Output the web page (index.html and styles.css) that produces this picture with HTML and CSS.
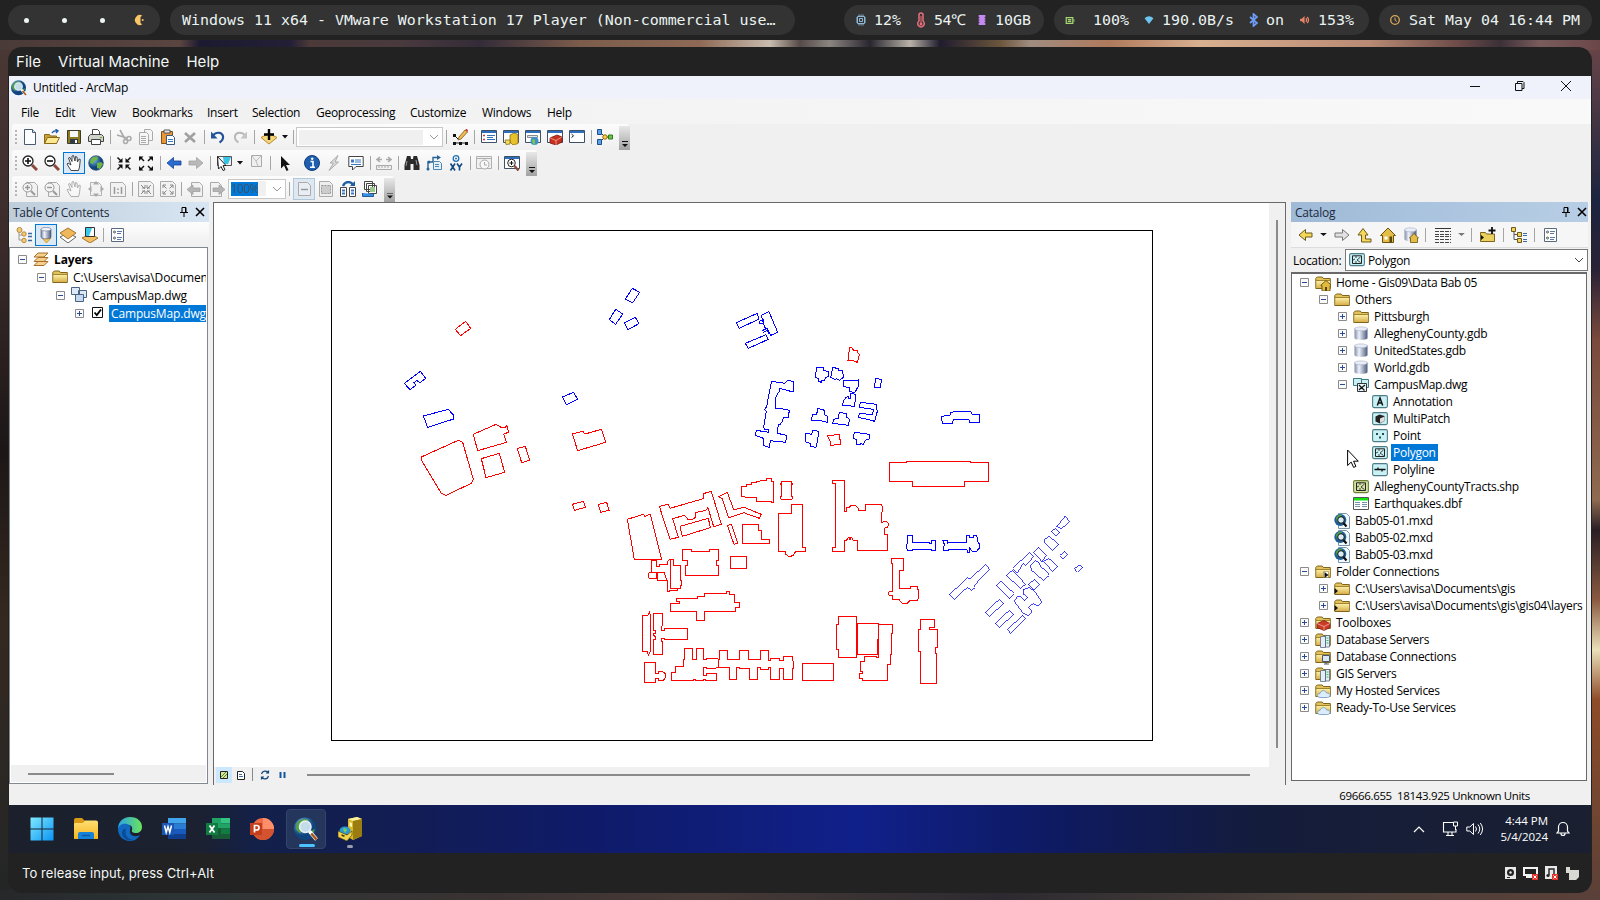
FILE: index.html
```html
<!DOCTYPE html>
<html lang="en">
<head>
<meta charset="utf-8">
<title>Untitled - ArcMap</title>
<link rel="stylesheet" href="styles.css">
</head>
<body>
<svg class="defs" aria-hidden="true">
<defs>
<linearGradient id="gdb" x1="0" x2="1" y1="0" y2="0"><stop offset="0" stop-color="#7f8ba6"/><stop offset=".35" stop-color="#eef2fa"/><stop offset="1" stop-color="#4c5a7c"/></linearGradient>
<linearGradient id="gfo" x1="0" x2="0" y1="0" y2="1"><stop offset="0" stop-color="#fbeea6"/><stop offset="1" stop-color="#d8b04a"/></linearGradient>
<linearGradient id="gwin" x1="0" x2="1" y1="0" y2="1"><stop offset="0" stop-color="#7fe9ff"/><stop offset="1" stop-color="#0a94f5"/></linearGradient>
<linearGradient id="gex" x1="0" x2="0" y1="0" y2="1"><stop offset="0" stop-color="#ffdf74"/><stop offset="1" stop-color="#f8b51e"/></linearGradient>
<linearGradient id="gedge" x1="0" x2="1" y1="0" y2="0"><stop offset="0" stop-color="#2aa4e8"/><stop offset="1" stop-color="#6be35a"/></linearGradient>
<radialGradient id="gglobe" cx=".35" cy=".3"><stop offset="0" stop-color="#7fbcea"/><stop offset="1" stop-color="#0f447e"/></radialGradient>
<symbol id="new" viewBox="0 0 16 16"><path d="M2.5.5h8l3 3v12h-11z" fill="#fbfdff" stroke="#4b5a70"/><path d="M10.500.5v3h3" fill="#cfe0f2" stroke="#4b5a70"/></symbol>
<symbol id="open" viewBox="0 0 16 16"><path d="M.5 14.500v-9h5l1 1.500h6v7.500z" fill="#c9a13c" stroke="#8a6914"/><path d="M.5 14.500l3-6h12l-3 6z" fill="#fbe694" stroke="#8a6914"/><path d="M8 4c1-2 3-2.500 5-2.200M11.500.2l2.500 1.700-2 2" fill="none" stroke="#1b5dab" stroke-width="1.400"/></symbol>
<symbol id="save" viewBox="0 0 16 16"><path d="M1.500 1.500h13v13h-13z" fill="#8c7a22" stroke="#3e3a28"/><path d="M4 2h8v6H4z" fill="#f4f6f8"/><path d="M4 10h8v4.500H4z" fill="#2f3b44"/><path d="M9 11h2v3H9z" fill="#fff"/></symbol>
<symbol id="print" viewBox="0 0 16 16"><path d="M4.500 7V.5h5l2 2V7" fill="#fff" stroke="#444"/><path d="M.5 7.500l2-2h11l2 2v5H.5z" fill="#cfd2c8" stroke="#444"/><path d="M3.500 10.500h9v5h-9z" fill="#fff" stroke="#444"/><path d="M12 8h2v1h-2z" fill="#61b324"/></symbol>
<symbol id="cut" viewBox="0 0 16 16"><path d="M4 1l5 9M1 6l10 3" fill="none" stroke="#aaa" stroke-width="1.600"/><circle cx="9.500" cy="12.500" r="2" fill="none" stroke="#aaa" stroke-width="1.500"/><circle cx="13" cy="9.500" r="2" fill="none" stroke="#aaa" stroke-width="1.500"/></symbol>
<symbol id="copy" viewBox="0 0 16 16"><path d="M6.500.5h6l2 2v9h-8z" fill="#f5f5f5" stroke="#aaa"/><path d="M1.500 3.500h7l2 2v10h-9z" fill="#f5f5f5" stroke="#aaa"/><path d="M3 7.500h5M3 9.500h5M3 11.500h5M3 13.500h5" stroke="#aaa"/></symbol>
<symbol id="paste" viewBox="0 0 16 16"><path d="M1.500 2.500h11v12h-11z" fill="#e8963a" stroke="#80501a"/><path d="M4 1h6v3H4z" fill="#e9e9e9" stroke="#555"/><path d="M6.500 6.500h6l2 2v7h-8z" fill="#fff" stroke="#3c5a80"/><path d="M8 10.500h5M8 12.500h5" stroke="#3b78c4"/></symbol>
<symbol id="del" viewBox="0 0 16 16"><path d="M3 4l10 9M13 4L3 13" stroke="#a0a0a0" stroke-width="2.600"/></symbol>
<symbol id="undo" viewBox="0 0 16 16"><path d="M3 6.500C6 2.500 12 3 13 7c.5 3-1 5-3.500 6.500" fill="none" stroke="#23539b" stroke-width="2.200"/><path d="M1 2.500v7h6.500z" fill="#23539b"/></symbol>
<symbol id="redo" viewBox="0 0 16 16"><path d="M13 6.500C10 2.500 4 3 3 7c-.5 3 1 5 3.500 6.500" fill="none" stroke="#b8b8b8" stroke-width="2"/><path d="M15 2.500v7H8.500z" fill="#c4c4c4"/></symbol>
<symbol id="add" viewBox="0 0 16 16"><path d="M0 8.500l8-4 8 4-8 6.500z" fill="#f7d77c" stroke="#b88a26"/><path d="M8 0v11M3 5.500h10" stroke="#000" stroke-width="2.400"/></symbol>
<symbol id="editor" viewBox="0 0 16 16"><path d="M2 6l4 4M2 14h12" stroke="#222"/><path d="M1 5h3v3H1zM1 13h3v3H1zM7 13h3v3H7zM13 13h3v3h-3z" fill="#111"/><path d="M6 11l1-3 6-7 2.500 2-6.500 7z" fill="#f1bc4c" stroke="#7c5420" stroke-width=".8"/><path d="M13 1l2.500 2 .5-2-1.500-1.200z" fill="#cc3a3a"/></symbol>
<symbol id="wbase" viewBox="0 0 16 16"><path d="M.5 1.500h15v12H.5z" fill="#fff" stroke="#3e4f66"/><path d="M1 2h14v2H1z" fill="#2f6fc0"/></symbol>
<symbol id="wtoc" viewBox="0 0 16 16"><use href="#wbase"/><path d="M2 6.500h2M2 10.500h2" stroke="#d13a2a" stroke-width="1.500"/><path d="M6 6.500h8M6 8.500h6M6 10.500h8" stroke="#2f6fc0"/></symbol>
<symbol id="wcat" viewBox="0 0 16 16"><use href="#wbase"/><path d="M7 6l4-2 4 1.500v9L10 16l-3-3z" fill="#e8c22e" stroke="#8c7010" stroke-width=".8"/><path d="M2 11h5v4l-4 .5z" fill="#f5dc62" stroke="#8c7010" stroke-width=".8"/></symbol>
<symbol id="wsearch" viewBox="0 0 16 16"><use href="#wbase"/><path d="M2.500 6.500h10v2h-10z" fill="#dfe9f5" stroke="#888"/><circle cx="9.500" cy="12" r="4" fill="#3f8fc9"/><path d="M7 11c2-2 4 0 3 1s1 2 0 4c-2-1-3-3-3-5z" fill="#7cc74c"/></symbol>
<symbol id="wbox" viewBox="0 0 16 16"><use href="#wbase"/><path d="M3 9l7-3 5 2v5l-6 3-6-2z" fill="#c8311f" stroke="#7a150c" stroke-width=".8"/><path d="M3 9l6 2.500L15 8M9 11v5" stroke="#f0a79c" stroke-width=".8" fill="none"/></symbol>
<symbol id="wpy" viewBox="0 0 16 16"><use href="#wbase"/><path d="M2.500 5l2 1.800-2 1.800" fill="none" stroke="#111"/></symbol>
<symbol id="model" viewBox="0 0 16 16"><path d="M3 3l5 5M3 13l5-5h6" stroke="#333" fill="none"/><path d="M.5.500h4v5h-4zM.5 10.500h4v5h-4z" fill="#5aa0e8" stroke="#1c4e90"/><circle cx="8" cy="8" r="2.200" fill="#ffd24a" stroke="#8c6a10"/><path d="M11.500 6h4v4h-4z" fill="#6cc24a" stroke="#2c7a1c"/></symbol>
<symbol id="zin" viewBox="0 0 16 16"><circle cx="6" cy="6" r="5" fill="#fff" stroke="#222" stroke-width="1.300"/><path d="M6 3v6M3 6h6" stroke="#111" stroke-width="1.600"/><path d="M10 10l5 5" stroke="#8c4a3c" stroke-width="3"/></symbol>
<symbol id="zout" viewBox="0 0 16 16"><circle cx="6" cy="6" r="5" fill="#fff" stroke="#222" stroke-width="1.300"/><path d="M3 6h6" stroke="#111" stroke-width="1.600"/><path d="M10 10l5 5" stroke="#8c4a3c" stroke-width="3"/></symbol>
<symbol id="hand" viewBox="0 0 16 16"><path d="M5 15.500L1 9l1-1 3 2-2.500-7L4 2.500l2 4L6 1l1.500-.5L9 6l.5-4.500L11 2l.5 5L13 4l1.300.5L13.500 12l-1 3.500z" fill="#fff" stroke="#333" stroke-width=".9"/></symbol>
<symbol id="globe" viewBox="0 0 16 16"><circle cx="8" cy="8" r="7.300" fill="url(#gglobe)" stroke="#2a4a78" stroke-width=".7"/><path d="M3 4c3-3 6-3 7-2l-1 3-3 1-1 3-3-1zM9 8l4-1 2 2-3 5-3-1z" fill="#6fb53f"/></symbol>
<symbol id="fixin" viewBox="0 0 16 16"><path d="M1.500 2.500l4 4M14.500 2.500l-4 4M1.500 14.500l4-4M14.500 14.500l-4-4" stroke="#111" stroke-width="1.500"/><path d="M6.500 3v4.500H2zM9.500 3v4.500H14zM6.500 14V9.500H2zM9.500 14V9.500H14z" fill="#111"/></symbol>
<symbol id="fixout" viewBox="0 0 16 16"><path d="M2 2l4 4M14 2l-4 4M2 15l4-4M14 15l-4-4" stroke="#111" stroke-width="1.500"/><path d="M1 1.500h4.500L1 6zM15 1.500h-4.500L15 6zM1 15.500h4.500L1 11zM15 15.500h-4.500L15 11z" fill="#111"/></symbol>
<symbol id="left" viewBox="0 0 16 16"><path d="M1 8l6.500-5.500v3.500H15v4H7.500v3.500z" fill="#2b6cd4" stroke="#15418e" stroke-width=".8"/></symbol>
<symbol id="right" viewBox="0 0 16 16"><path d="M15 8L8.500 2.500v3.500H1v4h7.500v3.500z" fill="#b9b9b9" stroke="#a2a2a2" stroke-width=".8"/></symbol>
<symbol id="select" viewBox="0 0 16 16"><path d="M1.500 1.500h14v9h-14z" fill="#f1f1f1" stroke="#555"/><path d="M7 2h8l-3 7H8z" fill="#35c3e6"/><path d="M1.500 1.500l8.500 9-3 .2 2 4-2 .8-2-4-2.500 2.500z" fill="#fff" stroke="#222"/></symbol>
<symbol id="clear" viewBox="0 0 16 16"><path d="M3.500.5h10v11h-10z" fill="#f0f0f0" stroke="#aaa"/><path d="M4 1l4 5 5-5M8 6l2 5" stroke="#bbb" fill="none"/></symbol>
<symbol id="arrow" viewBox="0 0 16 16"><path d="M4 1v12.500l3-3 2.500 5.500 2-1-2.500-5h4z" fill="#111"/></symbol>
<symbol id="info" viewBox="0 0 16 16"><circle cx="8" cy="8" r="7.500" fill="#1f5fb0" stroke="#123d78"/><path d="M6.500 6.500h2.500V12M6 12.200h5" stroke="#fff" stroke-width="1.600" fill="none"/><circle cx="8.200" cy="3.800" r="1.200" fill="#fff"/></symbol>
<symbol id="bolt" viewBox="0 0 16 16"><path d="M12 .5L4 8h3.500L3 15.500 12.500 7H9z" fill="#ddd" stroke="#aaa"/></symbol>
<symbol id="callout" viewBox="0 0 16 16"><path d="M.8 1.500h14.400v10H8L4.500 15v-3.500H.8z" fill="#fff" stroke="#444"/><path d="M3 4.500h3v3H3z" fill="#3b78c4"/><path d="M7 5h6M7 7h6M3 9.500h10" stroke="#3b78c4"/></symbol>
<symbol id="measure" viewBox="0 0 16 16"><path d="M.5 10.500h15v4H.5zM3 11v2M6 11v2M9 11v2M12 11v2" fill="#f0f0f0" stroke="#aaa"/><path d="M1 4.500h5M10 4.500h5M4 2L1 4.500 4 7M12 2l3 2.500L12 7" stroke="#aaa" stroke-width="1.500" fill="none"/></symbol>
<symbol id="find" viewBox="0 0 16 16"><path d="M3 1h3.500l.5 3h2l.5-3H13l2.500 9v5h-6v-6h-3v6h-6v-5z" fill="#2b2b2b"/><path d="M3 6l-1 5M12 5l1 5" stroke="#999"/></symbol>
<symbol id="route" viewBox="0 0 16 16"><path d="M2 13V7h5V2.500h5" stroke="#2a6496" fill="none" stroke-width="1.400"/><path d="M11 0l4 2.500L11 5z" fill="#2a6496"/><circle cx="2" cy="14" r="1.500" fill="#2a6496"/><circle cx="3" cy="7" r="1.500" fill="#2a6496"/><path d="M7.500 6.500h6l2 2v6h-8z" fill="#e6f2fb" stroke="#4a87b5"/><path d="M9 9.500h4M9 11.500h4" stroke="#4a87b5"/></symbol>
<symbol id="xy" viewBox="0 0 16 16"><circle cx="8" cy="3.500" r="2.800" fill="#fff" stroke="#1f6fb0" stroke-width="1.300"/><circle cx="8" cy="3.500" r="1" fill="#1f6fb0"/><path d="M2.500 8.500l4.500 7M7 8.500l-4.500 7M9 8.500l2.500 3.500 2.500-3.500M11.500 12v3.500" stroke="#134a80" stroke-width="1.600" fill="none"/></symbol>
<symbol id="time" viewBox="0 0 16 16"><path d="M.5 1.500h15v12H.5zM1 3.500h14" fill="#f0f0f0" stroke="#b0b0b0"/><circle cx="8.500" cy="9.500" r="4.500" fill="#f8f8f8" stroke="#aaa"/><path d="M8.500 7v3h2.500" stroke="#aaa" fill="none"/></symbol>
<symbol id="viewer" viewBox="0 0 16 16"><use href="#wbase"/><circle cx="7.500" cy="8" r="3.800" fill="#fff" stroke="#222"/><path d="M7.500 6v4M5.500 8h4" stroke="#111"/><path d="M10.500 11l4 4.500" stroke="#8c4a3c" stroke-width="2.400"/></symbol>
<symbol id="gpage" viewBox="0 0 16 16"><path d="M4.500 1.500h8l3 3v11h-11z" fill="#f2f2f2" stroke="#aaa"/></symbol>
<symbol id="gzi" viewBox="0 0 16 16"><use href="#gpage"/><circle cx="5.500" cy="6.500" r="4.500" fill="#f4f4f4" stroke="#999"/><path d="M5.500 4v5M3 6.500h5" stroke="#999" stroke-width="1.400"/><path d="M9 10l4 4" stroke="#999" stroke-width="2"/></symbol>
<symbol id="gzo" viewBox="0 0 16 16"><use href="#gpage"/><circle cx="5.500" cy="6.500" r="4.500" fill="#f4f4f4" stroke="#999"/><path d="M3 6.500h5" stroke="#999" stroke-width="1.400"/><path d="M9 10l4 4" stroke="#999" stroke-width="2"/></symbol>
<symbol id="gfull" viewBox="0 0 16 16"><path d="M2.500 1.500h8l3 3v10h-11z" fill="#f2f2f2" stroke="#b5b5b5"/><path d="M8 0l3 3.500H5zM8 16l3-3.500H5zM0 8l3.500-3v6zM16 8l-3.500-3v6z" fill="#aaa"/></symbol>
<symbol id="g11" viewBox="0 0 16 16"><path d="M.5 1.500h12l3 3v11H.5z" fill="#f2f2f2" stroke="#aaa"/><path d="M4.500 6v7M11.500 6v7M8 7.500v1.500M8 11v1.500" stroke="#999" stroke-width="1.500"/></symbol>
<symbol id="gin" viewBox="0 0 16 16"><path d="M.5.500h12l3 3v12H.5z" fill="#f2f2f2" stroke="#aaa"/><path d="M3 4l4 4M13 4L9 8M3 13l3.500-3.500M13 13L9.500 9.500M7 4v3H4M9 4v3h3M7 13v-3H4M9 13v-3h3" stroke="#888" fill="none"/></symbol>
<symbol id="gout" viewBox="0 0 16 16"><path d="M.5.500h12l3 3v12H.5z" fill="#f2f2f2" stroke="#aaa"/><path d="M3 4l3.500 3.500M13 4L9.500 7.500M3 13l3.500-3.500M13 13L9.500 9.500M3 7V4h3M13 7V4h-3M3 10v3h3M13 10v3h-3" stroke="#888" fill="none"/></symbol>
<symbol id="gleft" viewBox="0 0 16 16"><use href="#gpage"/><path d="M0 8.500L6 4v3h7v3.500H6v3z" fill="#b5b5b5" stroke="#999" stroke-width=".7"/></symbol>
<symbol id="gright" viewBox="0 0 16 16"><path d="M1.500 1.500h8l3 3v11h-11z" fill="#f2f2f2" stroke="#aaa"/><path d="M16 8.500L10 4v3H4v3.500h6v3z" fill="#b5b5b5" stroke="#999" stroke-width=".7"/></symbol>
<symbol id="gdraft" viewBox="0 0 16 16"><path d="M2.500 1.500h9l3 3v10h-12z" fill="#e8eef4" stroke="#aaa"/><path d="M5 8.500h7" stroke="#999" stroke-width="1.500"/></symbol>
<symbol id="gfocus" viewBox="0 0 16 16"><path d="M1.500.5h10l3 3v12h-13z" fill="#eee" stroke="#aaa"/><path d="M3.500 4.500h9v8h-9z" fill="#ccc" stroke="#999" stroke-dasharray="2 1"/></symbol>
<symbol id="chg" viewBox="0 0 16 16"><path d="M.5 6.500h6v9h-6zM9.500 6.500h6v9h-6z" fill="#fff" stroke="#444"/><path d="M2 9.500h3M2 12.500h3M11 9.500h3M11 12.500h3" stroke="#3b78c4" stroke-width="2"/><path d="M3 5c2-5 8-5 10-1" fill="none" stroke="#1f5fa0" stroke-width="2.400"/><path d="M10 5h5V0z" fill="#1f5fa0"/></symbol>
<symbol id="ddp" viewBox="0 0 16 16"><path d="M2.500.5h8v8h-8zM4.500 2.500h8v8h-8zM6.500 4.500h8v8h-8z" fill="#fff" stroke="#444"/><path d="M8 6h5v5H8z" fill="#9cc88c"/><path d="M.5 12v3.500h11V13" fill="#3b8be0" stroke="#1f5fa0"/></symbol>
<symbol id="lorder" viewBox="0 0 16 16"><path d="M3 4v9h5M3 8h4" stroke="#999" fill="none"/><path d="M12 6.500h4M12 9.500h4M12 13.500h4" stroke="#3b6ca8" stroke-width="1.500"/><circle cx="3.500" cy="3" r="2.500" fill="#f0cc7a" stroke="#b98b38"/><circle cx="8" cy="7" r="2.200" fill="#f0cc7a" stroke="#b98b38"/><circle cx="8" cy="13.500" r="2.200" fill="#f0cc7a" stroke="#b98b38"/></symbol>
<symbol id="lsource" viewBox="0 0 16 16"><path d="M4 11l4.500 5 4.500-5z" fill="#f7c85c" stroke="#b88a26" stroke-width=".7"/><path d="M3 2v8c0 2.500 10 2.500 10 0V2z" fill="url(#gdb)" stroke="#46506a" stroke-width=".6"/><ellipse cx="8" cy="2.200" rx="5" ry="1.800" fill="#eef2fa" stroke="#6a748c" stroke-width=".6"/></symbol>
<symbol id="lvis" viewBox="0 0 16 16"><path d="M0 10l8-4 8 4-8 6z" fill="#fff" stroke="#666"/><path d="M0 6l8-5 8 5-8 6z" fill="#eeb75a" stroke="#a8742a"/></symbol>
<symbol id="lsel" viewBox="0 0 16 16"><path d="M0 11l8-4 8 4-8 5z" fill="#f3c066" stroke="#a8742a"/><path d="M3.500.5h9v9h-9z" fill="#37c9e8" stroke="#333"/><path d="M10 1l-3 8h5V1z" fill="#fff"/></symbol>
<symbol id="opts" viewBox="0 0 16 16"><path d="M2.500 1.500h12v13h-12z" fill="#fff" stroke="#5a6b80"/><circle cx="5.500" cy="5" r="1" fill="none" stroke="#555"/><circle cx="5.500" cy="11" r="1" fill="none" stroke="#555"/><path d="M8 4.500h5M8 6.500h4M8 10.500h5M8 12.500h4" stroke="#5a7aa8"/></symbol>
<symbol id="layers" viewBox="0 0 16 16"><path d="M1 14.500l4-4h10l-4 4zM1 10.500l4-4h10l-4 4zM1 6l4-4h10l-4 4z" fill="#f6cf8c" stroke="#a4702c"/></symbol>
<symbol id="folder" viewBox="0 0 16 16"><path d="M.8 13.500v-10l1.500-1.500h5l1 1.500h7v10z" fill="#e3c25c" stroke="#7e641c"/><path d="M1.500 6h13.500v7H1.500z" fill="url(#gfo)"/><path d="M1 5.500h14" stroke="#a08430"/></symbol>
<symbol id="fhome" viewBox="0 0 16 16"><use href="#folder"/><path d="M6 10l5-4.500 5 4.500v.8h-1V16H7v-5.200H6z" fill="#e2bb3e" stroke="#6b5212" stroke-width=".9"/><path d="M10 12h2v4h-2z" fill="#5a4512"/></symbol>
<symbol id="fconn" viewBox="0 0 16 16"><use href="#folder"/><path d="M8.500 7.500h5v6h-5z" fill="#fff" stroke="#9a8030" stroke-width=".6"/><path d="M9.500 8l4 3-4 3z" fill="#111"/></symbol>
<symbol id="flink" viewBox="0 0 16 16"><use href="#folder"/><path d="M.5 7l3.500 3-3.500 3z" fill="#111"/></symbol>
<symbol id="ftool" viewBox="0 0 16 16"><use href="#folder"/><path d="M2 8.500l7-3 6 3v4L9 15.500l-7-3z" fill="#cb3a26" stroke="#7a150c" stroke-width=".7"/><path d="M2 8.500l7 3 6-3M9 11.500v4" stroke="#f3b1a6" stroke-width=".8" fill="none"/></symbol>
<symbol id="fserv" viewBox="0 0 16 16"><use href="#folder"/><path d="M5.500 4.500h5v11h-5zM10.500 3.500h4v11.500h-4z" fill="#e4edf6" stroke="#5a6b80" stroke-width=".8"/><path d="M11.500 6h2M11.500 8.500h2M11.500 11h2" stroke="#3b6"/></symbol>
<symbol id="fdbc" viewBox="0 0 16 16"><use href="#folder"/><path d="M7.500 6.500h7v6h-7zM9 15h5M11 13v2" fill="#dce7f4" stroke="#46566e"/></symbol>
<symbol id="fcloud" viewBox="0 0 16 16"><use href="#folder"/><path d="M5 14.500c-4-.5-3-4 0-4 1-4 6-3.500 6.500-.5 4-.5 5 4 1 4.500z" fill="#dcecfa" stroke="#6d97bf" stroke-width=".8"/></symbol>
<symbol id="gdbs" viewBox="0 0 16 16"><path d="M1.500 2.500v9.500c0 2.500 13 2.500 13 0V2.500z" fill="url(#gdb)"/><ellipse cx="8" cy="2.800" rx="6.500" ry="1.900" fill="#e8edf7" stroke="#a7b0c4" stroke-width=".6"/></symbol>
<symbol id="cad" viewBox="0 0 16 16"><path d="M.5.5h8v7h-8zM7.500 3.500h8v7h-8z" fill="#dce8f6" stroke="#4c6484"/><path d="M4.500 7.500h8v7h-8z" fill="#c4d8ef" stroke="#4c6484"/></symbol>
<symbol id="cad2" viewBox="0 0 16 16"><path d="M.5 1.500h8v7h-8zM8.500 2.500h7v8h-7z" fill="#c8f0f2" stroke="#3c7a84"/><path d="M4.500 6.500h9v8h-9z" fill="#e8f8f8" stroke="#333"/><path d="M6 8l5.500 5.500M12 8l-5 4M6 13l2-2" stroke="#111" stroke-width="1.200"/></symbol>
<symbol id="tile" viewBox="0 0 16 16"><rect x=".6" y="1.600" width="14.800" height="12" rx="1.500" fill="#c9f1f4" stroke="#4d7d88" stroke-width="1.100"/></symbol>
<symbol id="tann" viewBox="0 0 16 16"><use href="#tile"/><path d="M5.300 11.500L8 4l2.700 7.500M6.300 9h3.500" fill="none" stroke="#111" stroke-width="1.500"/></symbol>
<symbol id="tmul" viewBox="0 0 16 16"><use href="#tile"/><path d="M3.500 5.500l4-2 5 1.500v5l-4.500 2.500-4.500-2z" fill="#222"/><path d="M8 7.500l4.500-2v4.500L8 12z" fill="#ddd"/></symbol>
<symbol id="tpt" viewBox="0 0 16 16"><use href="#tile"/><path d="M4 5h2v2H4zM10 5h2v2h-2zM7 8.500h2v2H7z" fill="#1c4c55"/></symbol>
<symbol id="tpg" viewBox="0 0 16 16"><use href="#tile"/><path d="M3.500 3.800h9v7.700h-9z" fill="none" stroke="#222"/><path d="M4 8l2-1M6 10h2M11.500 5L8 8l3.500 2.500M6 5h2" fill="none" stroke="#333" stroke-width=".9"/></symbol>
<symbol id="tpl" viewBox="0 0 16 16"><use href="#tile"/><path d="M2.500 7.500h11M6 5.500v2M10 7.500v2" stroke="#111" stroke-width="1.300"/></symbol>
<symbol id="shp" viewBox="0 0 16 16"><rect x=".6" y="1.600" width="14.800" height="12" rx="1.500" fill="#d4e2a4" stroke="#6d8034" stroke-width="1.100"/><path d="M3.500 3.800h9v7.700h-9z" fill="none" stroke="#222"/><path d="M4 8l2-1M6 10h2M11.500 5L8 8l3.500 2.500M6 5h2" fill="none" stroke="#333" stroke-width=".9"/></symbol>
<symbol id="dbf" viewBox="0 0 16 16"><path d="M.5 1.500h15v12H.5z" fill="#fff" stroke="#555"/><path d="M1 2h14v2.500H1z" fill="#12e212"/><path d="M2 6.500h5M2 8.500h5M2 10.500h5M9 6.500h5M9 8.500h5M9 10.500h5" stroke="#7a92ae"/></symbol>
<symbol id="mxd" viewBox="0 0 16 16"><path d="M4.500.5h8l3 3v12h-11z" fill="#f4f9fd" stroke="#7895b0"/><circle cx="6.300" cy="7" r="6" fill="#1d5f96"/><path d="M2 5c1-3 4-4 6-3l-2 4-3 3z" fill="#4fa24a"/><circle cx="7" cy="7" r="3.300" fill="#d8ecf8" stroke="#111"/><path d="M9.500 10l3 3.500" stroke="#111" stroke-width="2.200"/></symbol>
<symbol id="arcmap" viewBox="0 0 16 16"><circle cx="7.500" cy="7.800" r="7.500" fill="url(#gglobe)"/><path d="M2 4c2-3 6-3 8-2L7 6l-3 5-3-3zM10 10l4-2-2 5z" fill="#4fa24a"/><circle cx="7.500" cy="6.500" r="3.800" fill="#cfe6f4" fill-opacity=".9" stroke="#e9edf2" stroke-width="1.100"/><path d="M10.300 9.500l4.700 5.500" stroke="#fff" stroke-width="2.400"/><path d="M11.500 11l3.500 4" stroke="#a8561c" stroke-width="1.700"/></symbol>
<symbol id="yleft" viewBox="0 0 16 16"><path d="M1 8l6.500-5.500v3.500H14v4H7.500v3.500z" fill="#f5d75c" stroke="#6b5a18"/></symbol>
<symbol id="yright" viewBox="0 0 16 16"><path d="M15 8L8.500 2.500v3.500H1v4h7.500v3.500z" fill="#e2e2e2" stroke="#777"/></symbol>
<symbol id="yup" viewBox="0 0 16 16"><path d="M1 8l5-6.500L11 8H8.500v4H14v3H4.500V8z" fill="#f5d75c" stroke="#6b5a18"/></symbol>
<symbol id="house" viewBox="0 0 16 16"><path d="M.5 8.500L8 1l7.500 7.500h-2v7h-11v-7z" fill="#e3bd45" stroke="#6b5212"/><path d="M4.500 9.500h3v3h-3z" fill="#fff"/><path d="M9.500 9.500h2.500v6H9.500z" fill="#5a4512"/></symbol>
<symbol id="dbhome" viewBox="0 0 16 16"><path d="M1.500 2.500v9.500c0 3 12 3 12 0V2.500z" fill="url(#gdb)"/><ellipse cx="7.500" cy="2.800" rx="6" ry="2" fill="#e8edf7" stroke="#a7b0c4" stroke-width=".6"/><path d="M6.500 11l4.500-4.500 4.500 4.500h-1v4.500h-7V11z" fill="#e3bd45" stroke="#6b5212" stroke-width=".8"/></symbol>
<symbol id="grid" viewBox="0 0 16 16"><path d="M0 1.500h16" stroke="#333"/><path d="M0 4.500h16M0 7.500h16M0 9.500h16M0 12.500h16M0 15.500h16" stroke="#444" stroke-dasharray="4 1"/></symbol>
<symbol id="addf" viewBox="0 0 16 16"><path d="M.5 14.500v-9h5l1 1.500h8v7.500z" fill="#ead05e" stroke="#7e641c"/><path d="M12 0v7M8.500 3.500h7" stroke="#111" stroke-width="1.800"/><path d="M1 8l3 2.500L1 13z" fill="#111"/></symbol>
<symbol id="tree" viewBox="0 0 16 16"><path d="M3 5v7.500h4M3 7.500h4" stroke="#555" fill="none"/><path d="M.5.500h4v4h-4zM6.500 5.500h4v4h-4zM6.500 11.500h4v4h-4z" fill="#f0d25c" stroke="#6b5a18"/><path d="M12 6.500h4M12 8.500h4M12 12.500h4M12 14.500h4" stroke="#3b6ca8"/></symbol>
<symbol id="plus" viewBox="0 0 9 9"><path d="M.5.500h8v8h-8z" fill="#fbfbfb" stroke="#8b8b8b"/><path d="M2 4.500h5M4.500 2v5" stroke="#2a4a9a"/></symbol>
<symbol id="minus" viewBox="0 0 9 9"><path d="M.5.500h8v8h-8z" fill="#fbfbfb" stroke="#8b8b8b"/><path d="M2 4.500h5" stroke="#2a4a9a"/></symbol>
<symbol id="pin" viewBox="0 0 10 10"><path d="M3 .5v5M7 .5v5M3 .5h4M1 5.500h8M5 6v4" stroke="#000" fill="none"/><path d="M6 1h1v4.500H6z"/></symbol>
<symbol id="cross" viewBox="0 0 10 10"><path d="M1 1l8 8M9 1L1 9" stroke="#000" stroke-width="1.600"/></symbol>
<symbol id="chev" viewBox="0 0 10 10"><path d="M1 3l4 4 4-4" fill="none" stroke="currentColor"/></symbol>
</defs>
</svg>

<header class="topbar">
  <div class="pill spaces"><i></i><i></i><i></i><svg width="10" height="14" viewBox="0 0 10 14"><path d="M8.500 3A4.700 5 0 1 0 8.500 11 2.500 2 0 0 1 6 8.500V5.500A2.500 2 0 0 1 8.500 3z" fill="#f9c667"/><path d="M3 2.800h3.500v8.400H3z" fill="#f9c667"/><circle cx="8.700" cy="7" r="1" fill="#f9c667"/></svg></div>
  <div class="pill wtitle">Windows 11 x64 - VMware Workstation 17 Player (Non-commercial use…</div>
  <div class="pill sys">
    <svg width="10" height="12" viewBox="0 0 10 12"><path d="M1.500 2.500h7v7h-7zM3.500 4.500h3v3h-3zM3 .5v2M5 .5v2M7 .5v2M3 9.500v2M5 9.500v2M7 9.500v2M0 4h1.500M0 6h1.500M0 8h1.500M8.500 4H10M8.500 6H10M8.500 8H10" fill="none" stroke="#8fb8d8"/></svg><b class="a">12%</b>
    <svg width="10" height="16" viewBox="0 0 10 16"><path d="M3 9V3a2 2 0 0 1 4 0v6a3.300 3.300 0 1 1-4 0z" fill="none" stroke="#ea6f7c" stroke-width="1.500"/><path d="M5 4v7" stroke="#ea6f7c"/><circle cx="5" cy="12" r="1.500" fill="#ea6f7c"/></svg><b class="b">54℃</b>
    <svg width="10" height="10" viewBox="0 0 10 12"><path d="M1 0h8v12H1z" fill="#c58af0"/><path d="M0 3h2M0 6h2M0 9h2M8 3h2M8 6h2M8 9h2" stroke="#333"/></svg><b>10GB</b>
  </div>
  <div class="pill net">
    <svg width="10" height="7" viewBox="0 0 10 8"><path d="M.7.700h7.500v6.600H.7zM2.500 3h4M2.500 5h4" fill="none" stroke="#a6d672" stroke-width="1.400"/><path d="M9 2.500h1v3H9z" fill="#a6d672"/></svg><b class="c">100%</b>
    <svg width="10" height="8" viewBox="0 0 10 9"><path d="M0 2.500Q5-2 10 2.500L5 9z" fill="#6cc5ee"/></svg><b class="d">190.0B/s</b>
    <svg width="9" height="14" viewBox="0 0 9 14"><path d="M1 4l7 6-3.500 3V1L8 4 1 10" fill="none" stroke="#6f9cf5" stroke-width="1.700"/></svg><b class="e">on</b>
    <svg width="10" height="8" viewBox="0 0 11 9"><path d="M0 3h2l3-3v9L2 6H0z" fill="#ee8468"/><path d="M6.500 2.500q1.500 2 0 4M8 1q3 3.500 0 7" fill="none" stroke="#ee8468" stroke-width="1.400"/></svg><b>153%</b>
  </div>
  <div class="pill clock"><svg width="10" height="10" viewBox="0 0 10 10"><circle cx="5" cy="5" r="4.300" fill="none" stroke="#d9a95a" stroke-width="1.300"/><path d="M5 2.500V5l1.800 1.500" fill="none" stroke="#d9a95a"/></svg><b>Sat May 04 16:44 PM</b></div>
</header>

<main class="vm">
  <nav class="vmmenu"><span>File</span><span>Virtual Machine</span><span>Help</span></nav>
  <section class="guest">
    <div class="title"><svg class="i16"><use href="#arcmap"/></svg><span>Untitled - ArcMap</span>
      <svg class="winbtn" width="112" height="12" viewBox="0 0 112 12"><path d="M1 6.500h10" stroke="#111"/><path d="M46.500 3.500h6.500v7h-6.500zM48.500 3.500v-2h5.500l1 1v6h-2" fill="none" stroke="#111"/><path d="M92 1l10 10M102 1L92 11" stroke="#111"/></svg></div>
    <nav class="menu"><span style="width:34px">File</span><span style="width:36px">Edit</span><span style="width:41px">View</span><span style="width:75px">Bookmarks</span><span style="width:45px">Insert</span><span style="width:64px">Selection</span><span style="width:94px">Geoprocessing</span><span style="width:72px">Customize</span><span style="width:65px">Windows</span><span>Help</span></nav>

    <div class="bar w1"><i class="grip"></i><svg class="ic"><use href="#new"/></svg><svg class="ic"><use href="#open"/></svg><svg class="ic"><use href="#save"/></svg><svg class="ic"><use href="#print"/></svg><i class="s6"></i><svg class="ic"><use href="#cut"/></svg><svg class="ic"><use href="#copy"/></svg><svg class="ic"><use href="#paste"/></svg><svg class="ic"><use href="#del"/></svg><i class="s6"></i><svg class="ic"><use href="#undo"/></svg><svg class="ic"><use href="#redo"/></svg><i class="s7"></i><svg class="ic"><use href="#add"/></svg><i class="car"></i><i class="s6"></i><div class="combo scale"><i></i><svg><use href="#chev"/></svg></div><i class="s6"></i><svg class="ic"><use href="#editor"/></svg><i class="s7"></i><svg class="ic"><use href="#wtoc"/></svg><svg class="ic"><use href="#wcat"/></svg><svg class="ic"><use href="#wsearch"/></svg><svg class="ic"><use href="#wbox"/></svg><svg class="ic"><use href="#wpy"/></svg><i class="s6"></i><svg class="ic"><use href="#model"/></svg><i class="over"></i></div>
    <div class="bar w2"><i class="grip"></i><svg class="ic"><use href="#zin"/></svg><svg class="ic"><use href="#zout"/></svg><svg class="ic on"><use href="#hand"/></svg><svg class="ic"><use href="#globe"/></svg><i class="s6"></i><svg class="ic"><use href="#fixin"/></svg><svg class="ic"><use href="#fixout"/></svg><i class="s6"></i><svg class="ic"><use href="#left"/></svg><svg class="ic"><use href="#right"/></svg><i class="s6"></i><svg class="ic"><use href="#select"/></svg><i class="car"></i><svg class="ic"><use href="#clear"/></svg><i class="s7"></i><svg class="ic"><use href="#arrow"/></svg><i class="gap5"></i><svg class="ic"><use href="#info"/></svg><svg class="ic"><use href="#bolt"/></svg><svg class="ic"><use href="#callout"/></svg><i class="s6"></i><svg class="ic"><use href="#measure"/></svg><i class="s6"></i><svg class="ic"><use href="#find"/></svg><svg class="ic"><use href="#route"/></svg><svg class="ic"><use href="#xy"/></svg><i class="s6"></i><svg class="ic"><use href="#time"/></svg><i class="s6"></i><svg class="ic"><use href="#viewer"/></svg><i class="over"></i></div>
    <div class="bar w3"><i class="grip"></i><svg class="ic"><use href="#gzi"/></svg><svg class="ic"><use href="#gzo"/></svg><svg class="ic dim"><use href="#hand"/></svg><svg class="ic"><use href="#gfull"/></svg><svg class="ic"><use href="#g11"/></svg><i class="s6"></i><svg class="ic"><use href="#gin"/></svg><svg class="ic"><use href="#gout"/></svg><i class="s5"></i><svg class="ic"><use href="#gleft"/></svg><svg class="ic"><use href="#gright"/></svg><div class="combo pct"><b>100%</b><i></i><svg><use href="#chev"/></svg></div><i class="s7"></i><svg class="ic on2"><use href="#gdraft"/></svg><svg class="ic"><use href="#gfocus"/></svg><svg class="ic"><use href="#chg"/></svg><svg class="ic"><use href="#ddp"/></svg><i class="over"></i></div>

    <div class="work">
      <aside class="toc">
        <div class="phead"><span>Table Of Contents</span><svg><use href="#pin"/></svg><svg><use href="#cross"/></svg></div>
        <div class="ptools"><svg class="ic"><use href="#lorder"/></svg><svg class="ic on"><use href="#lsource"/></svg><svg class="ic"><use href="#lvis"/></svg><svg class="ic"><use href="#lsel"/></svg><i class="s5"></i><svg class="ic"><use href="#opts"/></svg></div>
        <div class="list">
          <div class="rows">
            <div class="row l0"><svg class="ex"><use href="#minus"/></svg><svg class="ti"><use href="#layers"/></svg><span class="strong">Layers</span></div>
            <div class="row l1"><svg class="ex"><use href="#minus"/></svg><svg class="ti"><use href="#folder"/></svg><span>C:\Users\avisa\Document</span></div>
            <div class="row l2"><svg class="ex"><use href="#minus"/></svg><svg class="ti"><use href="#cad"/></svg><span>CampusMap.dwg</span></div>
            <div class="row l3"><svg class="ex"><use href="#plus"/></svg><svg class="ti" viewBox="0 0 16 16"><path d="M2.500 2.500h10v10h-10z" fill="#fff" stroke="#111"/><path d="M4.500 7.500l2.300 2.500L11 4.500" fill="none" stroke="#000" stroke-width="1.800"/></svg><span class="sel">CampusMap.dwg</span></div>
          </div>
          <div class="hs"><i></i></div>
        </div>
      </aside>

      <section class="map">
        <svg class="canvas" viewBox="214 203 1055 563" width="1055" height="563" shape-rendering="crispEdges">
          <rect x="331.500" y="230.500" width="821" height="510" fill="#fff" stroke="#000"/>
          <g transform="translate(400 270) scale(.33333)">
            <path class="bl" d="M697 55L719 67 698 98 676 87zM647 118L668 132 647 163 628 149zM673 158L706 142 717 161 683 179zM13 340L61 304 77 325 60 338 50 331 42 338 47 346 30 359zM70 438L145 418 161 436 161 447 83 472zM487 381L521 367 533 388 499 404z"/>
            <path class="rd" d="M166 178L197 154 212 175 182 197zM220 493L288 463 301 471 316 472 320 466 326 486 311 493 320 517 233 542zM66 560L175 511 188 517 220 628 214 640 138 676 123 669 66 573zM244 566L298 550 314 607 258 623zM352 535L376 529 389 571 365 578zM517 492L549 484 555 492 604 478 617 517 533 542zM517 703L550 694 557 712 523 721zM595 703L620 697 627 721 602 727z"/>
          </g>
          <g transform="translate(620 460) scale(.33333)">
            <path class="rd" d="M22 178L70 163 74 169 91 163 125 298 43 298zM118 139L144 133 150 145 250 116 250 101 274 94 304 193 281 200 264 143 258 151 228 157 228 169 220 177 204 178 193 166 158 176 175 232 150 238zM180 199L265 175 271 203 187 229zM295 110L322 97 341 149 372 142 424 163 418 175 371 158 326 173 307 116zM322 196L334 193 353 249 342 253z"/>
            <path class="rd" d="M94 337V301H109V319H118V313H142V304L150 298H160V316H181V360L184 362V376L181 378V385H172V391H148V394H142V361H112V340M94 337H133L140 361M151 298V385H181M88 337H109V355H88L85 350V342z"/>
            <path class="rd" d="M187 268H214V274H269V268H295V301H289V316H295V346H196V316H203V301H187zM331 289H380V325H331zM364 80H379V73H394V67H410V64L439 61V55H455V64H461V127H455V124H409V112H379L364 109zM484 64H515V70H518V74H515V109H518V114L515 118H484L481 114V109H484V74H481V70H484zM367 193H416V211H424V238H449V250H367zM475 160H514V133H547V262H557V274H527L520 286 512 289H505L497 282V274H475z"/>
            <path class="rd" d="M637 61H673V154H679V142H688L692 137H706L716 146V151H737V133H785L788 151 785 158V188L794 184 802 186 806 193 802 202 794 204V225H802V271H712V241H700L696 233H692V238H689V233H684L680 241H673V274H637V262H646V70H637z"/>
            <path class="rd" d="M151 430H178V424H169V415H232V409H253V400H319V394H328V403H344V427H358V442H347V454H253V481H229V454H151zM67 466H84L88 457 91 466V574L85 586 82 574H67zM100 460H127V498L124 500V511H134V505H203V538H134V535H124V544H127V583H100V538H106V530L100 525V520H106V512L100 510zM73 607H106V641H115V634H127L137 642V652L130 661H115V655H106V667H73z"/>
            <path class="rd" d="M154 637H166V619H190V598H193V565H217V598H229V565H250V598H260V595H292L296 601V622L285 625H260V622H250V646H260V640H290V661H257V658H250V661H227V658H220V661H154zM296 598H298V571H322V598H358V571H385V598H421V571H445V601H452V595H478V601H490V589H518V601L520 604V625L517 628V658H490V625H478V658H451V622H445V628H421V622H412V658H388V625H358V622H349V658H328V622H296z"/>
            <path class="rd" d="M547 610H641V661H547zM655 469H709V592H655V568H649V493H655zM712 490H776V583H712zM776 493H818V520H814V583H811V613H802V661H727V657H718V642H727V634H721V604H733V589H770V592H776zM773 538V583"/>
          </g>
          <g transform="translate(720 290) scale(.33333)">
            <path class="bl" d="M49 98L112 70 117 87 58 115zM124 76L147 65 173 127 152 136 141 115 134 112 128 94zM76 160L138 134 145 148 85 175zM118 94L130 90 131 100 120 102zM127 122L140 115 146 132M130 128L142 120"/>
            <path class="bl" d="M155 274L195 280 202 271 220 274V304H212L180 295 178 304 170 316 166 325V355H180L208 361 205 382H190L187 394 181 403H175L172 430 200 436 197 457 151 452 148 472 130 466V445L106 436 109 421 146 427V418H134L131 412 139 364 134 358 140 350 146 316zM290 232L311 234V241L325 245V260L318 262 313 271 305 271V277L295 274V266L286 262zM338 232L355 236 356 242 368 240 370 262 358 271 350 266 345 269 332 262zM370 271L416 270 414 290 405 307 399 307 388 304V292L370 290zM398 310L407 314 404 349 368 346 370 334 378 322 386 318V325H391V312zM467 265L485 269 481 292H463zM421 337L470 343V355L472 364 464 394 450 390 415 382 418 370 457 374 461 358 418 352zM293 355L314 361 314 374 323 380V397L299 391 275 391 277 374H290zM358 367L379 371 380 382 389 388 385 406 337 400 342 388 355 385zM278 421L296 424 293 452 288 472 272 469 271 460 256 455 257 430 275 433zM403 427L449 433 447 447 436 451 430 464 424 460 420 464 409 463V449L400 445zM664 379L690 376 692 367 712 364H751L757 373 778 374 779 397H749L746 388 700 389 698 400H667z"/>
            <path class="rd" d="M388 172L396 174 400 180 412 181V188L418 193 412 217 400 212 384 211 385 187 388 185zM322 438L358 433 362 463 331 466V455zM508 517H560V514H752V517H806V574H733V589H577V574H508z"/>
          </g>
          <g transform="translate(860 500) scale(.33333)">
            <path class="rd" d="M94 175H130V211H118V265H151V259H172V268H176V292L172 301H151L142 310H128L118 301V298H97V286H88L85 280 88 275H97V190H94zM181 358H223V382H208V388H232V442H226V460H230V550H181V454H175V388H181z"/>
            <path class="bl" d="M142 106H157V127H208V130H214V121H227V151H214V148H157V151H142L139 140 142 130zM248 121H262V130L267 127H320V106H330V112H341V106H350L353 124 359 133V143L350 154H337L328 143V157H323L320 148H265V151H250L253 133z"/>
            <path class="bl fine" d="M268 284L323 233 330 238 376 193 389 208 343 256 346 262 335 272 322 262 283 298zM615 49L629 64 605 86 590 80zM586 85L599 98 588 107 574 95zM568 109L596 133 577 151 553 127 555 118zM614 154L623 163 609 178 599 167zM661 194L668 203 653 217 643 206zM536 142L559 166 546 185 521 157zM508 157L521 170 497 196 490 190 472 219 458 206zM457 211L497 253 481 265 439 226zM526 182L536 187 543 202 556 209 568 226 550 241 530 224 516 212 511 197zM566 175L593 199 577 214 551 184zM524 238L539 253 522 269 505 253zM424 244L463 281 449 296 409 256zM418 298L431 311 388 349 376 337zM448 331L461 344 418 382 406 370zM488 346L497 355 451 400 443 388zM490 268L508 263 525 275 545 306 535 319 520 310 506 322 514 332V340L505 347 490 340 463 304 472 290 482 290 494 302 503 292 490 282z"/>
          </g>
        </svg>
        <div class="vs"><i></i></div>
        <div class="mbot"><svg class="mb on3" viewBox="0 0 16 16"><path d="M4.500 4.500h7v7h-7z" fill="#d9e48c" stroke="#222"/><path d="M5 10l5-5M7 11l4-4" stroke="#4a8a3a"/></svg><svg class="mb" viewBox="0 0 16 16"><path d="M4.500 4.500h5l2 2v6h-7z" fill="#fff" stroke="#222"/><path d="M6 7.500h3M6 9.500h4" stroke="#3b6ca8"/></svg><i class="bs"></i><svg class="mb" viewBox="0 0 16 16"><path d="M4.500 7a3.800 3.800 0 0 1 7-1M11.500 9a3.800 3.800 0 0 1-7 1M11.500 3.500V6H9M4.500 12.500V10H7" fill="none" stroke="#13457e" stroke-width="1.200"/></svg><svg class="mb" viewBox="0 0 16 16"><path d="M6.500 5v6M10.500 5v6" stroke="#13559e" stroke-width="2"/></svg><i class="ht"></i></div>
        <div class="corner"></div>
      </section>

      <aside class="cat">
        <div class="phead act"><span>Catalog</span><svg><use href="#pin"/></svg><svg><use href="#cross"/></svg></div>
        <div class="ctools"><svg class="ic"><use href="#yleft"/></svg><i class="car c1"></i><svg class="ic g1"><use href="#yright"/></svg><svg class="ic g1"><use href="#yup"/></svg><svg class="ic g1"><use href="#house"/></svg><svg class="ic g1"><use href="#dbhome"/></svg><i class="s7"></i><svg class="ic g3"><use href="#grid"/></svg><i class="car c2"></i><i class="s7"></i><svg class="ic g2"><use href="#addf"/></svg><i class="s6"></i><svg class="ic g2"><use href="#tree"/></svg><i class="s6"></i><svg class="ic g2"><use href="#opts"/></svg></div>
        <div class="loc"><span>Location:</span><div class="locbox"><svg class="i16"><use href="#tpg"/></svg><span>Polygon</span><svg class="cv"><use href="#chev"/></svg></div></div>
        <div class="tree">
          <div class="row l0"><svg class="ex"><use href="#minus"/></svg><svg class="ti"><use href="#fhome"/></svg><span>Home - Gis09\Data Bab 05</span></div>
          <div class="row l1"><svg class="ex"><use href="#minus"/></svg><svg class="ti"><use href="#folder"/></svg><span>Others</span></div>
          <div class="row l2"><svg class="ex"><use href="#plus"/></svg><svg class="ti"><use href="#folder"/></svg><span>Pittsburgh</span></div>
          <div class="row l2"><svg class="ex"><use href="#plus"/></svg><svg class="ti"><use href="#gdbs"/></svg><span>AlleghenyCounty.gdb</span></div>
          <div class="row l2"><svg class="ex"><use href="#plus"/></svg><svg class="ti"><use href="#gdbs"/></svg><span>UnitedStates.gdb</span></div>
          <div class="row l2"><svg class="ex"><use href="#plus"/></svg><svg class="ti"><use href="#gdbs"/></svg><span>World.gdb</span></div>
          <div class="row l2"><svg class="ex"><use href="#minus"/></svg><svg class="ti"><use href="#cad2"/></svg><span>CampusMap.dwg</span></div>
          <div class="row l3"><i class="ex"></i><svg class="ti"><use href="#tann"/></svg><span>Annotation</span></div>
          <div class="row l3"><i class="ex"></i><svg class="ti"><use href="#tmul"/></svg><span>MultiPatch</span></div>
          <div class="row l3"><i class="ex"></i><svg class="ti"><use href="#tpt"/></svg><span>Point</span></div>
          <div class="row l3"><i class="ex"></i><svg class="ti"><use href="#tpg"/></svg><span class="sel">Polygon</span></div>
          <div class="row l3"><i class="ex"></i><svg class="ti"><use href="#tpl"/></svg><span>Polyline</span></div>
          <div class="row l2"><i class="ex"></i><svg class="ti"><use href="#shp"/></svg><span>AlleghenyCountyTracts.shp</span></div>
          <div class="row l2"><i class="ex"></i><svg class="ti"><use href="#dbf"/></svg><span>Earthquakes.dbf</span></div>
          <div class="row l1"><i class="ex"></i><svg class="ti"><use href="#mxd"/></svg><span>Bab05-01.mxd</span></div>
          <div class="row l1"><i class="ex"></i><svg class="ti"><use href="#mxd"/></svg><span>Bab05-02.mxd</span></div>
          <div class="row l1"><i class="ex"></i><svg class="ti"><use href="#mxd"/></svg><span>Bab05-03.mxd</span></div>
          <div class="row l0"><svg class="ex"><use href="#minus"/></svg><svg class="ti"><use href="#fconn"/></svg><span>Folder Connections</span></div>
          <div class="row l1"><svg class="ex"><use href="#plus"/></svg><svg class="ti"><use href="#flink"/></svg><span>C:\Users\avisa\Documents\gis</span></div>
          <div class="row l1"><svg class="ex"><use href="#plus"/></svg><svg class="ti"><use href="#flink"/></svg><span>C:\Users\avisa\Documents\gis\gis04\layers</span></div>
          <div class="row l0"><svg class="ex"><use href="#plus"/></svg><svg class="ti"><use href="#ftool"/></svg><span>Toolboxes</span></div>
          <div class="row l0"><svg class="ex"><use href="#plus"/></svg><svg class="ti"><use href="#fserv"/></svg><span>Database Servers</span></div>
          <div class="row l0"><svg class="ex"><use href="#plus"/></svg><svg class="ti"><use href="#fdbc"/></svg><span>Database Connections</span></div>
          <div class="row l0"><svg class="ex"><use href="#plus"/></svg><svg class="ti"><use href="#fserv"/></svg><span>GIS Servers</span></div>
          <div class="row l0"><svg class="ex"><use href="#plus"/></svg><svg class="ti"><use href="#fcloud"/></svg><span>My Hosted Services</span></div>
          <div class="row l0"><svg class="ex"><use href="#plus"/></svg><svg class="ti"><use href="#fcloud"/></svg><span>Ready-To-Use Services</span></div>
          <svg class="mouse" width="12" height="19" viewBox="0 0 12 19"><path d="M.6 1v15.500l3.600-3.400 2.400 5.300 2.300-1-2.300-5.200h4.700z" fill="#fff" stroke="#000"/></svg>
        </div>
      </aside>
    </div>
    <div class="status">69666.655&nbsp; 18143.925 Unknown Units</div>

    <div class="taskbar">
      <div class="app"><svg viewBox="0 0 24 24"><path d="M.5.500h11v11H.5zM12.500.500h11v11h-11zM.5 12.500h11v11H.5zM12.500 12.500h11v11h-11z" fill="url(#gwin)"/></svg></div>
      <div class="app"><svg viewBox="0 0 24 24"><path d="M0 3q0-2 2-2h6l3 3v4H0z" fill="#d99a16"/><path d="M0 7q0-1 1-1h8l2-2.500h11q2 0 2 2V22H0z" fill="url(#gex)"/><path d="M4 22v-5q0-2 2-2h12q2 0 2 2v5z" fill="#1683d8"/><path d="M8 18.500h8" stroke="#0d5ba5" stroke-width="1.500"/></svg></div>
      <div class="app"><svg viewBox="0 0 24 24"><path d="M0 12C0 4 6 0 12 0c8 0 12 5 12 10 0 4-3 6-6 6-3 0-5-1-4-3 1-3-1-5-4-5-5 0-9 3-10 4z" fill="url(#gedge)"/><path d="M0 12C1 7 6 6 9 7c4 1 4 4 3 6-1 5 4 8 10 5-3 5-7 6-10 6C5 24 0 19 0 12z" fill="#1269c0"/><path d="M8 12c-2 6 2 11 8 11-6 2-12-2-12-7 0-3 2-5 4-4z" fill="#0b4c96"/></svg></div>
      <div class="app"><svg viewBox="0 0 24 24"><path d="M6 1h18v5.500H6z" fill="#41a5ee"/><path d="M6 6.500h18V12H6z" fill="#2b7cd3"/><path d="M6 12h18v5.500H6z" fill="#185abd"/><path d="M6 17.500h18V22H6z" fill="#103f91"/><path d="M0 6h12v12H0z" fill="#1a56b4"/><path d="M2.500 8.500l1.700 7L6 9.500l1.800 6 1.700-7" fill="none" stroke="#fff" stroke-width="1.500"/></svg></div>
      <div class="app"><svg viewBox="0 0 24 24"><path d="M6 1h9v10.500H6z" fill="#21a366"/><path d="M15 1h9v5.500h-9z" fill="#33c481"/><path d="M15 6.500h9v5h-9z" fill="#21a366"/><path d="M6 11.500h9v10.500H6z" fill="#185c37"/><path d="M15 11.500h9v5.500h-9z" fill="#107c41"/><path d="M15 17h9v5h-9z" fill="#185c37"/><path d="M0 6h12v12H0z" fill="#107c41"/><path d="M3.500 8.500l5 7M8.500 8.500l-5 7" stroke="#fff" stroke-width="1.800"/></svg></div>
      <div class="app"><svg viewBox="0 0 24 24"><circle cx="13" cy="12" r="11" fill="#ed6c47"/><path d="M13 1a11 11 0 0 1 11 11H13z" fill="#ff8f6b"/><path d="M2 12h22a11 11 0 0 1-22 0z" fill="#d35230"/><path d="M0 6h12v12H0z" fill="#c43e1c"/><path d="M4.500 15.500v-7h2.200q2.300 0 2.300 2.200T6.700 13H4.500" fill="none" stroke="#fff" stroke-width="1.700"/></svg></div>
      <div class="app act2"><svg viewBox="0 0 16 16"><use href="#arcmap"/></svg><i></i></div>
      <div class="app run"><svg viewBox="0 0 24 24"><path d="M10 2l9-2 5 2v17l-9 4-5-3z" fill="#d9b92c"/><path d="M10 2l5 2 9-2-5-2z" fill="#fbf0a0"/><path d="M15 4v19l9-4V2z" fill="#9a7c10"/><path d="M11.500 5l2.500 1v4l-2.500-1z" fill="#fff4b0"/><ellipse cx="7" cy="13.500" rx="5.500" ry="4" fill="#2a9ad6"/><path d="M5 12q3-2 4 1l-2 3z" fill="#7bd04c"/><path d="M0 14l9 4 5-4v4l-5 6-9-4z" fill="#efd550" stroke="#5c4a0a" stroke-width=".7"/><path d="M3.500 18l3 1.200" stroke="#4a3c08" stroke-width="1.500"/></svg><i></i></div>
      <div class="tray">
        <svg width="12" height="8" viewBox="0 0 12 8"><path d="M1 7l5-5 5 5" fill="none" stroke="#fff" stroke-width="1.200"/></svg>
        <svg class="mon" width="17" height="16" viewBox="0 0 17 16"><path d="M11 1.500H1.500v9.500h12.500V8M4 14.500h8M6 11v3M10 11v3" fill="none" stroke="#fff" stroke-width="1.100"/><path d="M11.500 1h4v4h-4zM13.500 5v4" fill="none" stroke="#fff"/></svg>
        <svg width="18" height="14" viewBox="0 0 18 14"><path d="M.8 5h3L7.500 1.500v11L3.800 9h-3zM9.500 4.500q2 2.500 0 5M12 2.500q3.500 4.500 0 9M14.300 1q4.500 6 0 12" fill="none" stroke="#fff"/></svg>
        <div class="tm">4:44 PM<br>5/4/2024</div>
        <svg width="14" height="16" viewBox="0 0 14 16"><path d="M1 12h12l-1.500-2V6a4.500 4.500 0 0 0-9 0v4zM5 12.500a2 2 0 0 0 4 0" fill="none" stroke="#fff" stroke-width="1.200"/></svg>
      </div>
    </div>
  </section>
  <footer class="foot"><span>To release input, press Ctrl+Alt</span>
    <svg width="76" height="16" viewBox="0 0 76 16"><path d="M1 2h11v12H1z" fill="#e8e8e8"/><circle cx="6.500" cy="7.500" r="3.500" fill="#222"/><circle cx="6.500" cy="7.500" r="1.200" fill="#eee"/><path d="M3 12.500h3" stroke="#222"/><path d="M19 2h15v9H19zM22 11h10v2H22z" fill="#f2f2f2"/><path d="M21 4h11v5H21z" fill="#222"/><path d="M28 9h6v6h-6z" fill="#e2342c"/><path d="M29.500 10.500l3 3M32.500 10.500l-3 3" stroke="#fff"/><path d="M41 1h12v13H41z" fill="#e8e8e8"/><path d="M45 10V4h5v5" fill="none" stroke="#222" stroke-width="1.400"/><circle cx="44" cy="10.500" r="1.600" fill="#222"/><path d="M48 9h6v6h-6z" fill="#e2342c"/><path d="M49.500 10.500l3 3M52.500 10.500l-3 3" stroke="#fff"/><path d="M62 2h4v3h9v7l-3 3h-7V8h-3z" fill="#d9d9d4"/></svg></footer>
</main>
</body>
</html>
```
FILE: styles.css
```css
* { box-sizing: border-box; }
body { margin: 0; width: 1600px; height: 900px; overflow: hidden; color: #000;
  font: 12px/17px "Open Sans", "Noto Sans", sans-serif;
  background:
    linear-gradient(90deg, #4a3a38 0, #5a4540 180px, #1c1a30 200px, #221f36 290px, #4b3a38 310px, #4a3a3e 400px, #332c38 480px, #7c5c4c 580px, #8e6a56 700px, #c9bcae 770px, #554a48 800px, #8b8580 830px, #2a2630 870px, #b9b2a8 910px, #1f1c2e 940px, #6b553c 1000px, #a08c80 1030px, #b07a5c 1110px, #d8b090 1200px, #b98a74 1370px, #6b4a48 1460px, #3c3038 1500px, #7a5c5c 1540px, #6b4648 1600px) 0 40px / 1600px 10px no-repeat,
    linear-gradient(90deg, #26282a, #2c3436 170px, #3a3232 500px, #473a36 700px, #2c2a30 1000px, #4a3f3a 1300px, #5a4038) 0 890px / 1600px 10px no-repeat,
    linear-gradient(180deg, #4a3834 40px, #3a2b2a 250px, #1c1616 450px, #35291f 620px, #232627 900px) 0 0 / 12px 900px no-repeat,
    linear-gradient(180deg, #6b4648 40px, #1c2440 200px, #2a2236 270px, #7a4a3c 340px, #8e6a50 500px, #2a1e24 530px, #8a5a40 600px, #eadfb8 650px, #8e4c28 700px, #5a4038 900px) 1588px 0 / 12px 900px no-repeat, #333; }
i { font-style: normal; }
b { font-weight: inherit; }
svg { display: block; flex: none; }
.defs { position: absolute; width: 0; height: 0; }

.topbar { height: 40px; background: #222; display: flex; align-items: center; padding: 0 8px; color: #eaf3f2; font: 14.950px/30px "DejaVu Sans Mono", monospace; white-space: pre; }
.pill { height: 30px; border-radius: 15px; background: #333; display: flex; align-items: center; }
.spaces { width: 152px; margin-right: 10px; padding-left: 16px; }
.spaces i { width: 5px; height: 5px; border-radius: 50%; background: #eef6f5; margin-right: 33px; }
.spaces svg { margin-left: -4px; }
.wtitle { width: 625px; padding-left: 12px; }
.sys { margin-left: 49px; width: 200px; padding-left: 12px; }
.sys svg, .net svg { margin-right: 8px; }
.sys .a { margin-right: 15px; }
.sys .b { width: 29px; margin-right: 14px; letter-spacing: -.5px; }
.net { margin-left: 10px; width: 315px; padding-left: 11px; }
.net .c { margin: 0 15px 0 10px; }
.net .d { margin-right: 15px; }
.net .e { margin-right: 16px; }
.clock { margin-left: 10px; width: 213px; padding-left: 11px; }
.clock svg { margin-right: 9px; }

.vm { margin: 7px 8px 0; height: 846px; border-radius: 14px; background: #222; padding: 0 1px; }
.vmmenu { height: 29px; display: flex; align-items: center; gap: 17px; padding-left: 7px; color: #f2f7f7; font: 15px/20px Inter, sans-serif; letter-spacing: .05px; }
.guest { height: 777px; width: 1582px; background: #f0f0f0; display: flex; flex-direction: column; }
.title { height: 23px; background: #eff2fa; display: flex; align-items: center; padding-left: 2px; }
.title span { margin-left: 6px; flex: 1; letter-spacing: -.17px; }
.i16 { width: 16px; height: 16px; }
.winbtn { margin-right: 10px; margin-top: -3px; }
.menu { height: 25px; background: linear-gradient(90deg, #f0f0f0, #f9f9f9); display: flex; align-items: center; padding: 1px 0 0 12px; letter-spacing: -.28px; }

.bar { height: 26px; display: flex; align-items: center; padding-right: 2px; background: linear-gradient(#fcfcfc, #efefef); border-radius: 3px; margin-left: 3px; }
.w1 { width: 617px; } .w2 { width: 525px; } .w3 { width: 382px; padding-bottom: 1px; }
.grip { width: 7px; height: 14px; flex: none; background: repeating-linear-gradient(#b5b5b5 0 2px, transparent 2px 4px) 3px 0 / 2px 14px no-repeat; }
.ic { width: 22px; height: 22px; padding: 3px; flex: none; }
.on { border: 1px solid #0078d7; background: #dbe9f6; padding: 2px; }
.on2 { border: 1px solid #b0c8dc; background: #dfe8f0; padding: 2px; }
.dim { opacity: .4; }
.s5, .s6, .s7, .gap5 { width: 5px; height: 14px; flex: none; background: linear-gradient(#a5a5a5, #a5a5a5) 50% 0 / 1px 14px no-repeat; }
.s6 { width: 6px; } .s7 { width: 7px; }
.gap5 { background: none; }
.car { width: 10px; height: 4px; flex: none; background: #111; clip-path: polygon(20% 0, 80% 0, 50% 90%); }
.combo { height: 20px; background: #fff; border: 1px solid #c8c8c8; display: flex; align-items: center; padding: 2px; color: #999; flex: none; }
.combo i { flex: 1; height: 15px; background: #f0f0f0; }
.combo svg { width: 10px; height: 10px; margin: 0 1px 0 6px; }
.scale { width: 147px; }
.pct { width: 58px; }
.pct b { background: #0078d7; color: #3c5570; line-height: 14px; width: 27px; letter-spacing: -.6px; }
.over { width: 11px; height: 24px; flex: none; margin: 2px 0 0 3px; padding: 15px 0 0 3px; background: linear-gradient(#e8e8e8, #a2a2a2); }
.over::after { content: ""; display: block; width: 6px; height: 6px; background: #111; clip-path: polygon(0 0, 100% 0, 100% 1px, 0 1px, 0 3px, 100% 3px, 50% 6px, 0 3px); }

.work { height: 583px; display: grid; grid-template-columns: 200px 1073px 300px; column-gap: 4px; }
.phead { height: 20px; display: flex; align-items: center; gap: 6px; padding: 0 4px; background: linear-gradient(90deg, #bfcddb, #d8e6f3); letter-spacing: -.25px; }
.phead span { flex: 1; color: #1b2a3c; padding-top: 1px; }
.phead svg { width: 10px; height: 10px; }
.ptools { height: 25px; display: flex; align-items: center; padding: 1px 0 0 4px; background: linear-gradient(#fdfdfd, #efefef); }
.list { width: 199px; height: 537px; background: #fff; border: 1px solid #828790; display: flex; flex-direction: column; padding: 2px 1px 1px; }
.rows { flex: 1; overflow: hidden; }
.row { height: 17px; display: flex; align-items: center; white-space: nowrap; }
.rows .row { height: 18px; }
.ex { width: 9px; height: 9px; flex: none; margin-right: 6px; }
.ti { width: 16px; height: 16px; margin-right: 3px; }
.row span { padding: 0 2px; letter-spacing: -.27px; }
.rows .row span { letter-spacing: -.15px; }
.strong { font-weight: 700; }
.sel { background: #0078d7; color: #fff; }
.rows .l0 { padding-left: 7px; } .rows .l1 { padding-left: 26px; } .rows .l2 { padding-left: 45px; } .rows .l3 { padding-left: 64px; }
.hs { height: 17px; background: #f0f0f0; }
.hs i { display: block; width: 86px; height: 2px; margin: 8px 0 0 17px; background: #8a8a8a; }

.map { border: 1px solid #696969; border-width: 1px 1px 0 1px; background: #f0f0f0; display: grid; grid-template: 563px 18px / 1055px 16px; height: 583px; }
.canvas { background: #fff; }
.rd, .bl { fill: none; stroke: #f00; stroke-width: 1px; vector-effect: non-scaling-stroke; }
.bl { stroke: #00f; }
.fine { stroke-width: .75px; }
.vs { padding: 17px 0 0 7px; }
.vs i { display: block; width: 2px; height: 528px; background: #8a8a8a; }
.mbot { display: flex; align-items: center; border-top: 1px solid #fff; padding: 0 0 2px 2px; }
.mb { width: 16px; height: 16px; margin-right: 1px; }
.on3 { background: #cce8ff; }
.bs { width: 1px; height: 13px; background: #888; margin: 0 4px 0 2px; }
.ht { width: 943px; height: 2px; margin-left: 16px; background: #8a8a8a; }

.cat { padding: 0 2px 0 1px; }
.act { background: linear-gradient(90deg, #9fbad7, #b8cee6); padding-right: 1px; }
.ctools { height: 25px; display: flex; align-items: center; background: #f6f6f6; padding-left: 4px; }
.c1 { width: 13px; }
.g1 { margin-left: 1px; }
.g2 { margin: 0 1px 0 2px; }
.g3 { margin: 0 1px 0 3px; }
.c2 { width: 13px; background: #777; }
.loc { height: 25px; display: flex; align-items: center; padding-left: 2px; border-top: 1px solid #ddd; }
.loc > span { width: 52px; letter-spacing: -.3px; }
.locbox { width: 243px; height: 22px; background: #fff; border: 1px solid #7a7a7a; display: flex; align-items: center; padding: 0 3px; }
.locbox span { margin-left: 3px; flex: 1; letter-spacing: -.35px; }
.cv { width: 10px; height: 10px; color: #444; }
.tree { position: relative; width: 296px; height: 509px; background: #fff; border: 1px solid #696969; border-width: 2px 1px 1px 1px; overflow: hidden; }
.tree .l0 { padding-left: 8px; } .tree .l1 { padding-left: 27px; } .tree .l2 { padding-left: 46px; } .tree .l3 { padding-left: 65px; }
.mouse { position: absolute; left: 55px; top: 175px; }
.status { height: 20px; line-height: 22px; text-align: right; padding-right: 61px; font-size: 11.500px; letter-spacing: -.35px; }

.taskbar { height: 48px; background: linear-gradient(90deg, #1b202c 0, #1b2130 190px, #13204a 250px, #121d55 400px, #0f1b6b 600px, #10208a 850px, #0e1a60 1050px, #141c3c 1250px, #1a2030 1582px); display: flex; align-items: center; padding-left: 13px; color: #fff; }
.app { width: 40px; height: 40px; margin-right: 4px; border-radius: 4px; padding: 8px; position: relative; }
.app svg { width: 24px; height: 24px; }
.app i { position: absolute; bottom: 1px; left: 12px; width: 16px; height: 3px; border-radius: 2px; background: #4cc2ff; }
.run i { left: 17px; width: 6px; background: #9a9fb0; }
.act2 { background: #24365c; border: 1px solid #33456a; padding: 7px; }
.tray { margin-left: auto; display: flex; align-items: center; padding-right: 21px; }
.mon { margin: 0 7px 0 17px; }
.tm { width: 64px; margin-right: 8px; text-align: right; font-size: 11.500px; line-height: 16px; letter-spacing: -.05px; }
.foot { height: 40px; display: flex; align-items: center; justify-content: space-between; padding: 0 11px 0 13px; color: #f2f7f7; font: 13px/20px Inter, sans-serif; letter-spacing: .07px; }
```
